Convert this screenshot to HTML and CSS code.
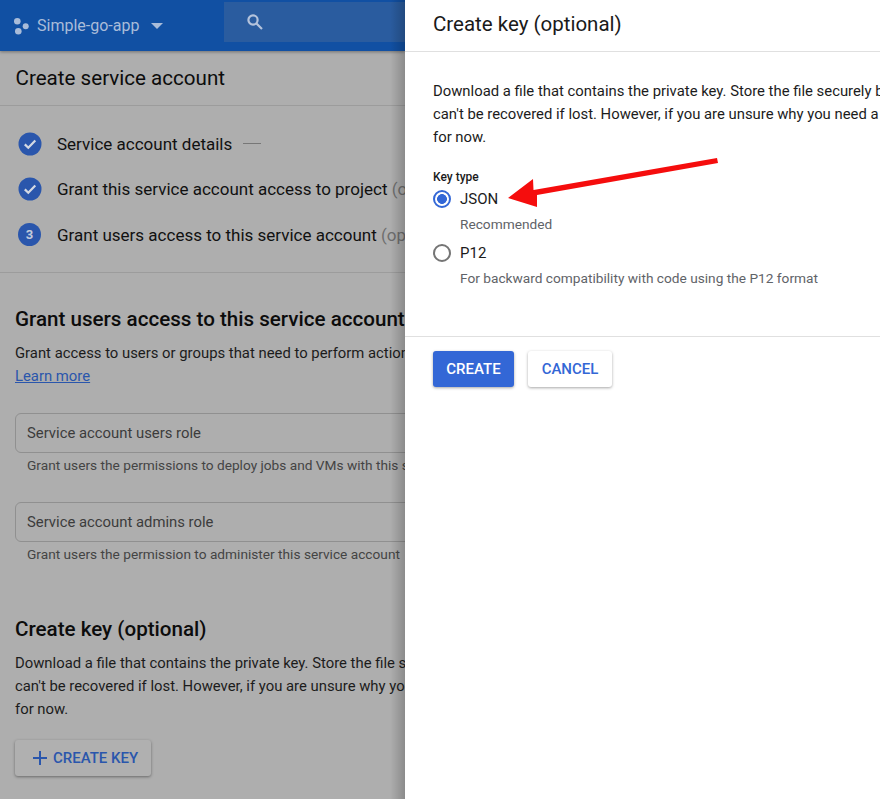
FILE: index.html
```html
<!DOCTYPE html>
<html>
<head>
  <title>Create service account</title>
  <link rel="stylesheet" href="styles.css">
</head>
<body>

<div class="page">
  <div class="back">
    <div class="topbar">
      <svg class="logo" width="20" height="18" viewBox="0 0 20 18">
        <circle cx="4.3" cy="4.3" r="3.3"/>
        <circle cx="12.7" cy="9.3" r="3"/>
        <circle cx="5.3" cy="14.3" r="3.3"/>
      </svg>
      <span class="project">Simple-go-app</span>
      <span class="caret"></span>
      <div class="search">
        <svg width="18" height="18" viewBox="0 0 18 18">
          <circle cx="7" cy="7" r="4.6"/>
          <path d="M10.5 10.5l5.5 5.5"/>
        </svg>
      </div>
    </div>

    <div class="titlebar">Create service account</div>

    <div class="steps">
      <div class="step">
        <svg class="badge" width="24" height="24" viewBox="0 0 24 24">
          <circle cx="12" cy="12" r="11.5"/>
          <path class="tick" d="M6.8 12.4l3.5 3.4 7-7.2"/>
        </svg>
        <span>Service account details</span>
        <span class="dash"></span>
      </div>
      <div class="step">
        <svg class="badge" width="24" height="24" viewBox="0 0 24 24">
          <circle cx="12" cy="12" r="11.5"/>
          <path class="tick" d="M6.8 12.4l3.5 3.4 7-7.2"/>
        </svg>
        <span>Grant this service account access to project <em>(optional)</em></span>
      </div>
      <div class="step">
        <span class="num">3</span>
        <span>Grant users access to this service account <em>(optional)</em></span>
      </div>
    </div>

    <div class="section">
      <h2>Grant users access to this service account (optional)</h2>
      <p class="copy">Grant access to users or groups that need to perform actions as this service account.</p>
      <p class="copy"><a href="#">Learn more</a></p>

      <div class="field first">Service account users role</div>
      <div class="hint">Grant users the permissions to deploy jobs and VMs with this service account</div>
      <div class="field">Service account admins role</div>
      <div class="hint">Grant users the permission to administer this service account</div>
    </div>

    <div class="section keys">
      <h2>Create key (optional)</h2>
      <p class="copy">Download a file that contains the private key. Store the file securely because this key</p>
      <p class="copy">can't be recovered if lost. However, if you are unsure why you need a key, skip this step</p>
      <p class="copy">for now.</p>
      <div class="addkey">
        <svg width="16" height="16" viewBox="0 0 16 16"><path d="M8 1v14M1 8h14"/></svg>
        CREATE KEY
      </div>
    </div>
  </div>

  <div class="drawer">
    <div class="drawer-head">Create key (optional)</div>

    <div class="drawer-body">
      <p class="copy">Download a file that contains the private key. Store the file securely because this key</p>
      <p class="copy">can't be recovered if lost. However, if you are unsure why you need a key, skip this step</p>
      <p class="copy">for now.</p>

      <div class="keytype">Key type</div>
      <div class="radio-row">
        <span class="radio on"></span>
        <span>JSON</span>
      </div>
      <div class="radio-note">Recommended</div>
      <div class="radio-row second">
        <span class="radio"></span>
        <span>P12</span>
      </div>
      <div class="radio-note">For backward compatibility with code using the P12 format</div>
    </div>

    <div class="actions">
      <button class="btn primary">CREATE</button>
      <button class="btn">CANCEL</button>
    </div>

    <!-- red annotation drawn on top of the screenshot -->
    <svg class="arrow" width="240" height="70" viewBox="0 0 240 70">
      <polygon points="238,10 239,15 58,47 58,59 29,50 54,31 54.5,42"/>
    </svg>
  </div>
</div>

</body>
</html>
```

FILE: styles.css
```css
html, body {
    margin: 0;
    height: 100%;
    overflow: hidden;
}
body {
    font-family: Roboto, "Liberation Sans", sans-serif;
    color: #000;
}
.page {
    position: relative;
    display: flex;
    width: 880px;
    height: 799px;
    overflow: hidden;
}

/* dimmed page behind the drawer */
.back {
    flex: 0 0 405px;
    width: 405px;
    background: #aeaeae;
    overflow: hidden;
    white-space: nowrap;
}
.topbar {
    display: flex;
    align-items: center;
    height: 51px;
    padding-left: 13px;
    background: #1150a3;
    box-shadow: 0 1px 3px rgba(0,0,0,.35);
    position: relative;
}
.logo {
    fill: #a9bcd9;
    margin-right: 4px;
}
.project {
    font-size: 16px;
    color: #a9bcd9;
}
.caret {
    width: 0;
    height: 0;
    margin-left: 12px;
    border-left: 6.5px solid transparent;
    border-right: 6.5px solid transparent;
    border-top: 6.5px solid #a9bcd9;
}
.search {
    display: flex;
    align-items: center;
    flex: 1;
    height: 40px;
    margin: 0 0 7px 61px;
    padding-left: 22px;
    background: #2a5c9f;
}
.search svg {
    fill: none;
    stroke: #b4c3dc;
    stroke-width: 2.2;
}
.titlebar {
    height: 54px;
    line-height: 54px;
    padding-left: 15.5px;
    font-size: 20.6px;
    color: #0c0c0c;
    border-bottom: 1px solid #9c9c9c;
}
.steps {
    padding: 15px 0 14px 17.5px;
    border-bottom: 1px solid #9c9c9c;
}
.step {
    display: flex;
    align-items: center;
    height: 45.5px;
    font-size: 17px;
    color: #111;
}
.step em {
    font-style: normal;
    color: #6e6e6e;
}
.badge {
    flex: none;
    margin-right: 15.5px;
}
.badge circle {
    fill: #2a56ac;
}
.tick {
    fill: none;
    stroke: #d4d9e3;
    stroke-width: 2.2;
}
.num {
    flex: none;
    width: 23px;
    height: 23px;
    line-height: 23px;
    margin: 0 16px 0 0.5px;
    text-align: center;
    border-radius: 50%;
    background: #2a56ac;
    color: #c4cbdb;
    font-size: 13px;
    font-weight: 700;
}
.dash {
    width: 18px;
    height: 1px;
    margin-left: 11px;
    background: #777;
}
.section {
    padding-left: 15px;
}
.section h2 {
    margin: 0;
    font-size: 20.6px;
    font-weight: 500;
    line-height: 24px;
    color: #0c0c0c;
    padding-top: 34px;
}
.copy {
    margin: 0;
    font-size: 14.85px;
    line-height: 23px;
    color: #1c1c1c;
}
.section h2 + .copy {
    margin-top: 11px;
}
.copy a {
    color: #2a56ac;
}
.field {
    box-sizing: border-box;
    width: 420px;
    height: 40px;
    line-height: 38px;
    padding-left: 11px;
    font-size: 14.85px;
    color: #3c3c3c;
    border: 1px solid #909090;
    border-radius: 6px;
}
.field.first {
    margin-top: 25px;
}
.hint {
    height: 49px;
    padding: 3px 0 0 12px;
    box-sizing: border-box;
    font-size: 13.7px;
    line-height: 18px;
    color: #444;
}
.keys h2 {
    padding-top: 26px;
}
.addkey {
    display: flex;
    align-items: center;
    width: 136px;
    height: 36px;
    margin-top: 19px;
    box-sizing: border-box;
    padding-left: 17px;
    font-size: 15px;
    font-weight: 500;
    color: #2a56ac;
    background: #b0b0b0;
    border-radius: 3px;
    box-shadow: 0 1px 3px rgba(0,0,0,.4);
}
.addkey svg {
    margin-right: 5px;
    fill: none;
    stroke: #2a56ac;
    stroke-width: 2;
}

/* drawer */
.drawer {
    position: relative;
    flex: 1;
    min-width: 0;
    background: #fff;
    overflow: hidden;
    white-space: nowrap;
}
.page::after {
    content: "";
    position: absolute;
    top: 0;
    left: 390px;
    width: 15px;
    height: 799px;
    background: linear-gradient(to right, rgba(0,0,0,0), rgba(0,0,0,.2));
}
.drawer-head {
    height: 51px;
    line-height: 48px;
    padding-left: 28px;
    font-size: 20.5px;
    color: #1a1a1a;
    border-bottom: 1px solid #e0e0e0;
}
.drawer-body {
    height: 285px;
    padding: 28px 0 0 28px;
    box-sizing: border-box;
    border-bottom: 1px solid #e0e0e0;
}
.keytype {
    margin-top: 20px;
    font-size: 12px;
    font-weight: 500;
    line-height: 16px;
    color: #1a1a1a;
}
.radio-row {
    display: flex;
    align-items: center;
    height: 24px;
    margin-top: 2px;
    font-size: 15px;
    color: #1c1c1c;
}
.radio-row.second {
    margin-top: 8px;
}
.radio {
    box-sizing: border-box;
    width: 18px;
    height: 18px;
    margin-right: 9px;
    border: 2px solid #757575;
    border-radius: 50%;
}
.radio.on {
    border-color: #3367d6;
    background: radial-gradient(circle, #3367d6 0 4.6px, transparent 5.2px);
}
.radio-note {
    padding: 4px 0 0 27px;
    font-size: 13.7px;
    line-height: 18px;
    color: #5f6368;
}
.actions {
    display: flex;
    gap: 14px;
    padding: 14px 0 0 28px;
}
.btn {
    width: 84px;
    height: 36px;
    padding: 0;
    border: 0;
    border-radius: 3px;
    font-family: inherit;
    font-size: 15px;
    font-weight: 500;
    color: #3367d6;
    background: #fff;
    box-shadow: 0 1px 3px rgba(0,0,0,.35);
}
.btn.primary {
    width: 81px;
    color: #fff;
    background: #3367d6;
}
.arrow {
    position: absolute;
    left: 74px;
    top: 148px;
    fill: #f50d0d;
}
```
